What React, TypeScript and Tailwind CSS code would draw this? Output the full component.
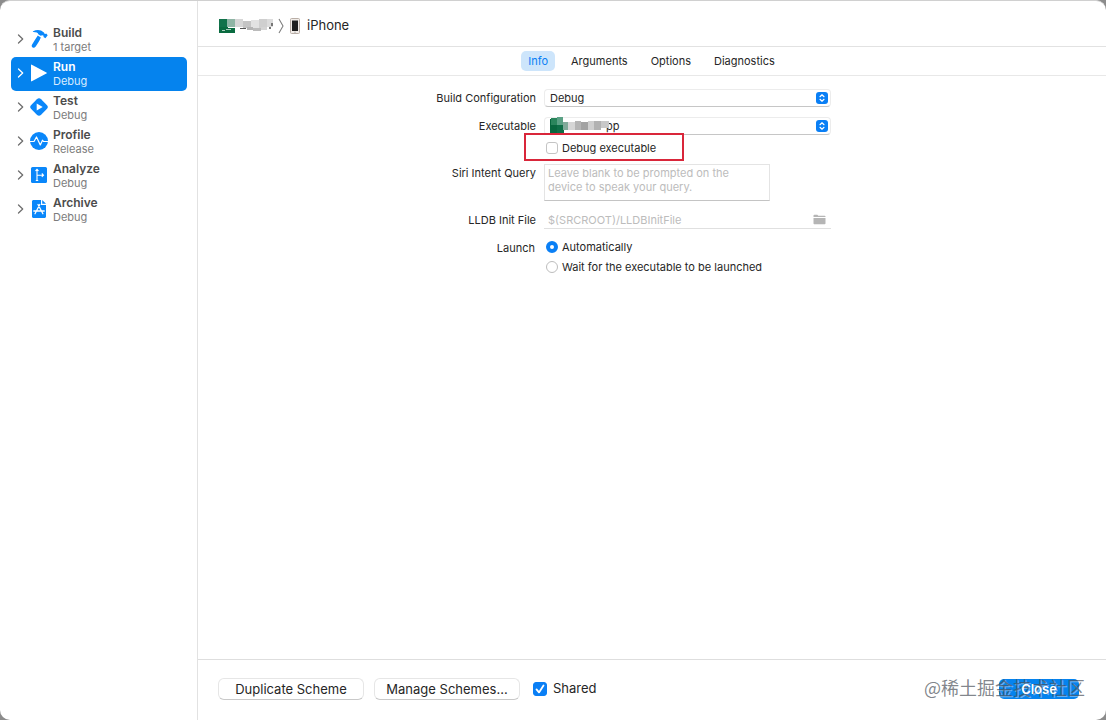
import React, { useState } from "react";

const BLUE = "#0a87fa";

const icons: Record<string, React.ReactNode> = {
  Build: (
    <svg viewBox="0 0 18 20" className="block h-5 w-[18px]" fill={BLUE}>
      <path d="M3.200 2.300C5.500.900 8.600.600 11 1.600l2.600 1.600c.5.300.6.800.7 1.400l.9.400 1-.5 1.500 1.800-2.300 2.900-1.900-1.300.1-1.100-1.300-.6-1.700.6-2.300-1.500C8.200 3.900 6.200 3.200 3.300 3.100c-.6 0-.6-.5-.1-.8z" />
      <path d="M7.800 6.500l3 2c-1.200 3.200-3.200 6.300-5.300 9.200-.8 1.100-2 1.300-2.900.700-1-.6-1.200-1.800-.5-2.900 1.900-2.900 3.600-5.800 5.700-9z" />
    </svg>
  ),
  Run: (
    <svg viewBox="0 0 18 20" className="block h-5 w-[18px]" fill="#fff">
      <path d="M1 2.200c0-.5.4-.7.800-.5l14.600 7.700c.6.300.6.900 0 1.200L1.800 18.300c-.4.200-.8 0-.8-.5z" />
    </svg>
  ),
  Test: (
    <svg viewBox="0 0 18 20" className="block h-5 w-[18px]">
      <rect x="2" y="3" width="14" height="14" rx="3" transform="rotate(45 9 10)" fill={BLUE} />
      <path d="M6.700 6.500v7l6-3.500z" fill="#fff" />
    </svg>
  ),
  Profile: (
    <svg viewBox="0 0 18 20" className="block h-5 w-[18px]">
      <circle cx="9" cy="10" r="9" fill={BLUE} />
      <path d="M0 10.500h4L6.500 6l3.800 8 2.200-4.800 1 1.300H18" fill="none" stroke="#fff" strokeWidth="1.200" strokeLinejoin="round" />
    </svg>
  ),
  Analyze: (
    <svg viewBox="0 0 18 20" className="block h-5 w-[18px]">
      <rect x="1" y="2" width="16" height="16" rx="1.500" fill={BLUE} />
      <path d="M7 4.500v11M7 10.200h6M5.500 5.800L7 4.300l1.500 1.500M11.800 8.500l1.700 1.700-1.700 1.700M5.800 15.500h2.400" fill="none" stroke="#fff" strokeWidth="1.100" />
    </svg>
  ),
  Archive: (
    <svg viewBox="0 0 18 20" className="block h-5 w-[18px]">
      <path d="M3.500 1H11v5h5v11.500c0 .8-.7 1.500-1.500 1.500h-11c-.8 0-1.500-.7-1.500-1.500v-15C2 1.700 2.700 1 3.500 1z" fill={BLUE} />
      <path d="M12.200 1L16 4.800h-3.800z" fill={BLUE} />
      <path d="M9.800 5.500L5 14.700M8 5.500l4.900 9.200M3.800 12h7M12 12h2.200" fill="none" stroke="#fff" strokeWidth="1.300" strokeLinecap="round" />
    </svg>
  ),
};

const actions = [
  { name: "Build", detail: "1 target" },
  { name: "Run", detail: "Debug" },
  { name: "Test", detail: "Debug" },
  { name: "Profile", detail: "Release" },
  { name: "Analyze", detail: "Debug" },
  { name: "Archive", detail: "Debug" },
];

const tabs = ["Info", "Arguments", "Options", "Diagnostics"];

function Sidebar() {
  const [selected, setSelected] = useState("Run");
  return (
    <nav className="w-[198px] shrink-0 border-r border-[#e2e2e2] pt-[22px] pr-2.5 pl-[11px]">
      {actions.map(({ name, detail }) => {
        const active = name === selected;
        return (
          <button
            key={name}
            type="button"
            onClick={() => setSelected(name)}
            className={`flex h-[34px] w-full items-center rounded-[5px] pb-0.5 pl-1.5 text-left ${active ? "bg-[#0583ee] text-white" : "text-[#4c4c4c]"}`}
          >
            <svg viewBox="0 0 7 10" className={`h-2.5 w-[7px] ${active ? "text-white" : "text-[#6e6e6e]"}`} fill="none" stroke="currentColor" strokeWidth="1.300" strokeLinecap="round" strokeLinejoin="round">
              <path d="M1.500 1L5.700 5 1.500 9" />
            </svg>
            <span className="ml-1.5 block">{icons[name]}</span>
            <span className="ml-[5px] block pt-0.5">
              <span className="block text-xs leading-[14px] font-semibold">{name}</span>
              <span className={`block text-[11px] leading-[14px] ${active ? "text-[#d9ecff]" : "text-[#7c7c7c]"}`}>{detail}</span>
            </span>
          </button>
        );
      })}
    </nav>
  );
}

function ProjectMosaic() {
  return (
    <svg viewBox="0 0 56 16" className="h-4 w-14" shapeRendering="crispEdges">
      <path d="M0 1h8v8H0z" fill="#11724a" />
      <path d="M8 1h8v8H8z" fill="#8fb5a5" />
      <path d="M0 10h16v5H0z" fill="#0a6b40" />
      <path d="M0 9h9v1H0z" fill="#0a6b40" />
      <path d="M3 12h3v1H3zM7 11h5v1H7z" fill="#a9cdbc" />
      <path d="M16 1h8v8h-8z" fill="#d6d6d6" />
      <path d="M24 3h8v7h-8z" fill="#c4c4c4" />
      <path d="M32 2h8v8h-8z" fill="#e2e2e2" />
      <path d="M40 1h8v9h-8z" fill="#cfcfcf" />
      <path d="M48 1h6v8h-6z" fill="#dcdcdc" />
      <path d="M21 10h6v1h-6z" fill="#555" />
      <path d="M28 9h6v3h-6z" fill="#b4b4b4" />
      <path d="M34 10h8v3h-8z" fill="#bbb" />
      <path d="M42 9h6v3h-6z" fill="#d4d4d4" />
      <path d="M52 5h2v3h-2zM50 9h2v2h-2z" fill="#777" />
    </svg>
  );
}

function AppMosaic() {
  return (
    <svg viewBox="0 0 60 16" className="h-4 w-[60px]" shapeRendering="crispEdges">
      <path d="M0 2h7v14H0z" fill="#08673e" />
      <path d="M7 0h6v8H7z" fill="#5ba185" />
      <path d="M1 1h6v7H1z" fill="#2a855c" />
      <path d="M7 8h7v8H7z" fill="#0e6f47" />
      <path d="M13 5h5v8h-5z" fill="#81aa9a" />
      <path d="M18 5h7v8h-7z" fill="#d6d6d6" />
      <path d="M25 4h6v9h-6z" fill="#b5b5b5" />
      <path d="M31 5h7v8h-7z" fill="#a2a2a2" />
      <path d="M38 4h6v9h-6z" fill="#cfcfcf" />
      <path d="M44 4h7v9h-7z" fill="#b2b2b2" />
      <path d="M51 4h8v7h-8z" fill="#c8c8c8" />
    </svg>
  );
}

function PopUp({ id, value, indent, children }: { id: string; value: string; indent?: boolean; children?: React.ReactNode }) {
  return (
    <div className="relative">
      <select
        id={id}
        className={`block h-[18px] w-full appearance-none rounded-[4px] border border-[#ececec] border-b-[#c6c6c6] bg-white pr-6 text-[11px] leading-4 outline-none ${indent ? "pl-[61px]" : "pl-[5px]"}`}
      >
        <option>{value}</option>
      </select>
      {children}
      <span className="pointer-events-none absolute top-[3px] right-[3px] flex size-3 items-center justify-center rounded-[3px] bg-[#0a7ff5]">
        <svg viewBox="0 0 8 10" className="h-2.5 w-2" fill="none" stroke="#fff" strokeWidth="1.200" strokeLinecap="round" strokeLinejoin="round">
          <path d="M2 3.700L4 1.800l2 1.900M2 6.300l2 1.900 2-1.900" />
        </svg>
      </span>
    </div>
  );
}

function Radio({ label, checked, onChange }: { label: string; checked: boolean; onChange: () => void }) {
  return (
    <label className="flex h-5 items-center gap-1 text-[11px]">
      <input
        type="radio"
        name="launch"
        checked={checked}
        onChange={onChange}
        className="m-0 size-3 appearance-none rounded-full border border-[#bdbdbd] bg-white checked:border-4 checked:border-[#0a7ff5]"
      />
      {label}
    </label>
  );
}

function InfoForm() {
  const [launch, setLaunch] = useState(0);
  return (
    <form className="mx-auto grid w-[434px] grid-cols-[101px_287px] gap-x-2 pt-[13px] text-[11px] leading-[14px] text-[#262626]">
      <label htmlFor="config" className="pt-0.5 text-right whitespace-nowrap">Build Configuration</label>
      <PopUp id="config" value="Debug" />

      <label htmlFor="executable" className="mt-2.5 pt-0.5 text-right">Executable</label>
      <div className="mt-2.5">
        <PopUp id="executable" value="pp" indent>
          <span className="pointer-events-none absolute top-0 left-1.5">
            <AppMosaic />
          </span>
        </PopUp>
      </div>

      <div className="relative col-start-2 flex h-[26px] items-center pl-0.5">
        <label className="flex items-center gap-1">
          <input type="checkbox" className="m-0 size-3 appearance-none rounded-[3px] border border-[#c4c4c4] bg-white checked:bg-[#0a7ff5]" />
          Debug executable
        </label>
        <span className="pointer-events-none absolute -top-0.5 -left-5 h-7 w-40 border-2 border-[#d9263a]" />
      </div>

      <label htmlFor="siri" className="mt-[3px] pt-0.5 text-right">Siri Intent Query</label>
      <textarea
        id="siri"
        placeholder={"Leave blank to be prompted on the\ndevice to speak your query."}
        className="mt-[3px] block h-[37px] w-[226px] resize-none border border-[#e4e4e4] border-b-[#c4c4c4] px-[3px] py-px leading-[14px] outline-none placeholder:text-[#bcbcbc]"
      />

      <label htmlFor="lldb" className="mt-2.5 pt-0.5 text-right">LLDB Init File</label>
      <div className="mt-2.5 flex h-[18px] items-center border-b border-[#e0e0e0] pr-[5px] pl-1">
        <input id="lldb" placeholder="$(SRCROOT)/LLDBInitFile" className="min-w-0 flex-1 outline-none placeholder:text-[#bcbcbc]" />
        <button type="button" aria-label="Choose file">
          <svg viewBox="0 0 13 11" className="block h-[11px] w-[13px]" fill="#b5b5b5">
            <path d="M.500 3V1.500c0-.5.3-.8.800-.8h3l1 1h6.400c.5 0 .8.300.8.800V3zM.500 4h12v5.200c0 .6-.4 1-1 1h-10c-.6 0-1-.4-1-1z" />
          </svg>
        </button>
      </div>

      <span className="mt-3 pr-px text-right">Launch</span>
      <div className="mt-2 pl-0.5">
        <Radio label="Automatically" checked={launch === 0} onChange={() => setLaunch(0)} />
        <Radio label="Wait for the executable to be launched" checked={launch === 1} onChange={() => setLaunch(1)} />
      </div>
    </form>
  );
}

export default function App() {
  const [tab, setTab] = useState("Info");
  const [shared, setShared] = useState(true);
  const pushButton = "h-[22px] w-[146px] rounded-[6px] border border-[#e6e6e6] border-b-[#c9c9c9] bg-white text-[13px] leading-5 whitespace-nowrap text-[#262626]";

  return (
    <div className="min-h-screen bg-[#8c8c8c] font-['Inter',sans-serif]">
      <div className="flex min-h-screen overflow-hidden rounded-[10px] border-t border-[#d0d0d0] bg-white">
        <Sidebar />
        <main className="flex min-w-0 flex-1 flex-col">
          <header className="flex h-[46px] items-center border-b border-[#e2e2e2] pt-1 pl-[21px] text-[13px] text-[#262626]">
            <ProjectMosaic />
            <svg viewBox="0 0 6 16" className="ml-[3px] h-4 w-1.5" fill="none" stroke="#808080" strokeWidth="1.100">
              <path d="M1 1l4 7-4 7" />
            </svg>
            <svg viewBox="0 0 10 16" className="ml-1.5 h-4 w-2.5">
              <rect x=".500" y=".500" width="9" height="15" rx="1" fill="#f1ece8" stroke="#b9aea6" />
              <path d="M2 2.500h6v10.500h-6z" fill="#1f1f1f" />
              <circle cx="5" cy="14.300" r=".7" fill="#aaa" />
            </svg>
            <span className="ml-[7px]">iPhone</span>
          </header>

          <div role="tablist" className="flex h-[29px] items-center justify-center gap-[9px] border-b border-[#e8e8e8] pr-px text-[11px]">
            {tabs.map((name) => (
              <button
                key={name}
                type="button"
                role="tab"
                aria-selected={tab === name}
                onClick={() => setTab(name)}
                className={`h-5 rounded-[5px] px-[7px] ${tab === name ? "bg-[#cde5fb] text-[#0a7ff5]" : "text-[#262626]"}`}
              >
                {name}
              </button>
            ))}
          </div>

          <div className="flex-1">
            <InfoForm />
          </div>

          <footer className="flex h-[61px] items-center border-t border-[#dedede] pr-[27px] pb-0.5 pl-5">
            <button type="button" className={pushButton}>Duplicate Scheme</button>
            <button type="button" className={`ml-2.5 ${pushButton}`}>Manage Schemes...</button>
            <label className="ml-[13px] flex items-center gap-1.5 text-[13px] text-[#262626]">
              <span className="relative block size-3.5">
                <input
                  type="checkbox"
                  checked={shared}
                  onChange={(e) => setShared(e.target.checked)}
                  className="m-0 block size-3.5 appearance-none rounded-[3px] border border-[#c4c4c4] checked:border-[#0a7ff5] checked:bg-[#0a7ff5]"
                />
                <svg viewBox="0 0 14 14" className="pointer-events-none absolute inset-0 size-3.5" fill="none" stroke="#fff" strokeWidth="1.800" strokeLinecap="round" strokeLinejoin="round">
                  <path d="M3.500 7.400l2.500 3 4.500-7" />
                </svg>
              </span>
              Shared
            </label>
            <div className="relative ml-auto">
              <button type="button" className="block h-5 w-20 rounded-[5px] bg-[#0583ee] text-[13px] leading-5 font-semibold text-white">
                <span className="relative z-20">Close</span>
              </button>
              <span className="pointer-events-none absolute -top-1.5 -right-1.5 z-10 font-['Noto_Sans_CJK_SC',sans-serif] text-lg leading-7 whitespace-nowrap text-[#4a5058]/70 [text-shadow:1px_1px_0_rgba(255,255,255,0.4)]">
                @稀土掘金技术社区
              </span>
            </div>
          </footer>
        </main>
      </div>
    </div>
  );
}
